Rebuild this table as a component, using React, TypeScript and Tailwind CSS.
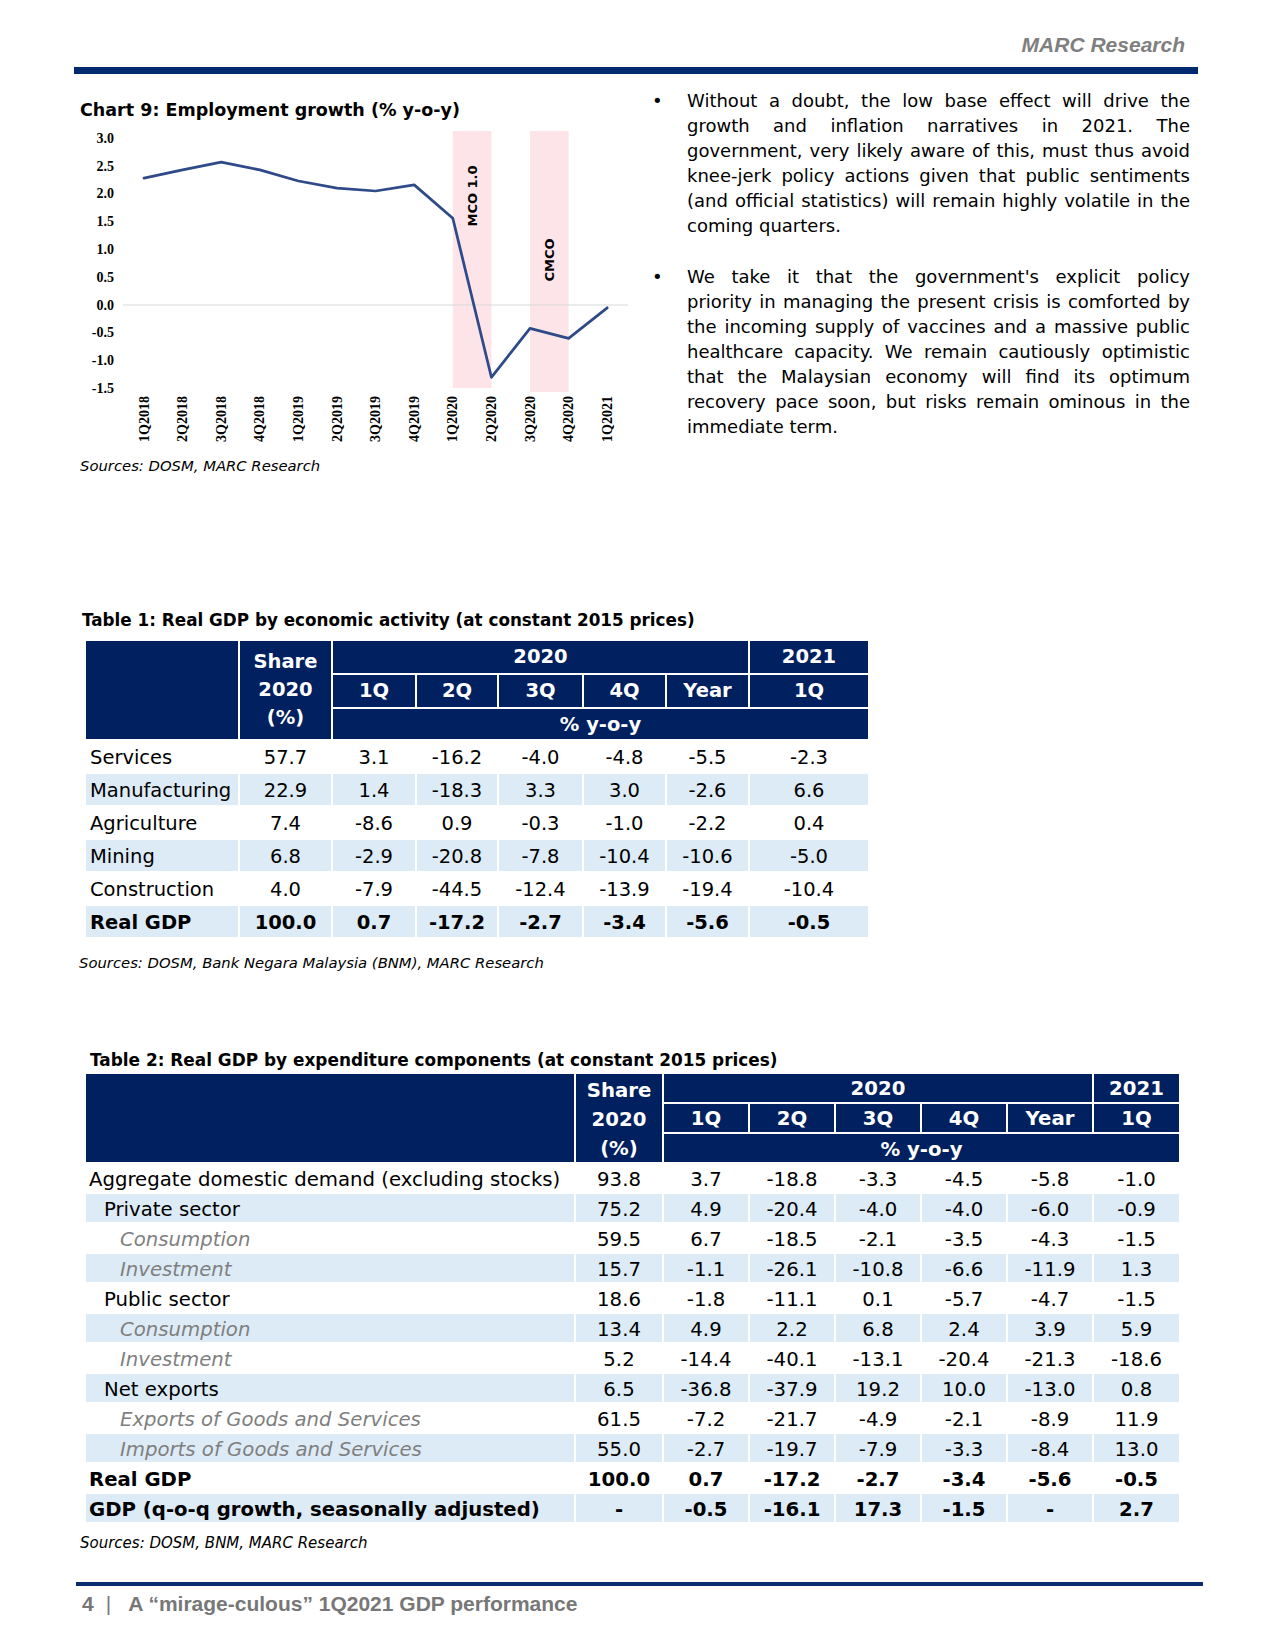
import React from 'react'

const quarters = ['1Q2018', '2Q2018', '3Q2018', '4Q2018', '1Q2019', '2Q2019', '3Q2019', '4Q2019', '1Q2020', '2Q2020', '3Q2020', '4Q2020', '1Q2021']
const growth = [2.28, 2.43, 2.57, 2.43, 2.23, 2.1, 2.05, 2.16, 1.56, -1.3, -0.42, -0.6, -0.05]
const ticks = [3.0, 2.5, 2.0, 1.5, 1.0, 0.5, 0.0, -0.5, -1.0, -1.5]

const px = (i: number) => 64 + i * 38.6
const py = (v: number) => 183 - v * 55.6

const table1 = [
    { label: 'Services', vals: ['57.7', '3.1', '-16.2', '-4.0', '-4.8', '-5.5', '-2.3'] },
    { label: 'Manufacturing', vals: ['22.9', '1.4', '-18.3', '3.3', '3.0', '-2.6', '6.6'] },
    { label: 'Agriculture', vals: ['7.4', '-8.6', '0.9', '-0.3', '-1.0', '-2.2', '0.4'] },
    { label: 'Mining', vals: ['6.8', '-2.9', '-20.8', '-7.8', '-10.4', '-10.6', '-5.0'] },
    { label: 'Construction', vals: ['4.0', '-7.9', '-44.5', '-12.4', '-13.9', '-19.4', '-10.4'] },
    { label: 'Real GDP', bold: true, vals: ['100.0', '0.7', '-17.2', '-2.7', '-3.4', '-5.6', '-0.5'] },
]

type Row = { label: string; level?: number; italic?: boolean; bold?: boolean; vals: string[] }

const table2: Row[] = [
    { label: 'Aggregate domestic demand (excluding stocks)', vals: ['93.8', '3.7', '-18.8', '-3.3', '-4.5', '-5.8', '-1.0'] },
    { label: 'Private sector', level: 1, vals: ['75.2', '4.9', '-20.4', '-4.0', '-4.0', '-6.0', '-0.9'] },
    { label: 'Consumption', level: 2, italic: true, vals: ['59.5', '6.7', '-18.5', '-2.1', '-3.5', '-4.3', '-1.5'] },
    { label: 'Investment', level: 2, italic: true, vals: ['15.7', '-1.1', '-26.1', '-10.8', '-6.6', '-11.9', '1.3'] },
    { label: 'Public sector', level: 1, vals: ['18.6', '-1.8', '-11.1', '0.1', '-5.7', '-4.7', '-1.5'] },
    { label: 'Consumption', level: 2, italic: true, vals: ['13.4', '4.9', '2.2', '6.8', '2.4', '3.9', '5.9'] },
    { label: 'Investment', level: 2, italic: true, vals: ['5.2', '-14.4', '-40.1', '-13.1', '-20.4', '-21.3', '-18.6'] },
    { label: 'Net exports', level: 1, vals: ['6.5', '-36.8', '-37.9', '19.2', '10.0', '-13.0', '0.8'] },
    { label: 'Exports of Goods and Services', level: 2, italic: true, vals: ['61.5', '-7.2', '-21.7', '-4.9', '-2.1', '-8.9', '11.9'] },
    { label: 'Imports of Goods and Services', level: 2, italic: true, vals: ['55.0', '-2.7', '-19.7', '-7.9', '-3.3', '-8.4', '13.0'] },
    { label: 'Real GDP', bold: true, vals: ['100.0', '0.7', '-17.2', '-2.7', '-3.4', '-5.6', '-0.5'] },
    { label: 'GDP (q-o-q growth, seasonally adjusted)', bold: true, vals: ['-', '-0.5', '-16.1', '17.3', '-1.5', '-', '2.7'] },
]

const bullets = [
    [
        'Without a doubt, the low base effect will drive the',
        'growth and inflation narratives in 2021. The',
        'government, very likely aware of this, must thus avoid',
        'knee-jerk policy actions given that public sentiments',
        '(and official statistics) will remain highly volatile in the',
        'coming quarters.',
    ],
    [
        "We take it that the government's explicit policy",
        'priority in managing the present crisis is comforted by',
        'the incoming supply of vaccines and a massive public',
        'healthcare capacity. We remain cautiously optimistic',
        'that the Malaysian economy will find its optimum',
        'recovery pace soon, but risks remain ominous in the',
        'immediate term.',
    ],
]

const quarterHeads = ['1Q', '2Q', '3Q', '4Q', 'Year', '1Q']

function EmploymentChart() {
    const line = growth.map((v, i) => `${i === 0 ? 'M' : 'L'}${px(i).toFixed(1)},${py(v).toFixed(1)}`).join(' ')
    return (
        <svg width="560" height="334" viewBox="0 0 560 334" className="block">
            <rect x={px(8)} y="9" width={px(9) - px(8)} height="257" fill="#fce4e8" />
            <rect x={px(10)} y="9" width={px(11) - px(10)} height="261" fill="#fce4e8" />
            <line x1="43" y1={py(0)} x2="548" y2={py(0)} stroke="#d9d9d9" strokeWidth="1" />
            {ticks.map((t) => (
                <text key={t} x="34" y={py(t)} textAnchor="end" dominantBaseline="central" fontFamily="'Liberation Serif', serif" fontWeight="bold" fontSize="14" fill="#000">
                    {t.toFixed(1)}
                </text>
            ))}
            {quarters.map((q, i) => (
                <text key={q} x={px(i)} y="274" textAnchor="end" dominantBaseline="central" transform={`rotate(-90 ${px(i)} 274)`} fontFamily="'Liberation Serif', serif" fontWeight="bold" fontSize="14" fill="#000">
                    {q}
                </text>
            ))}
            <text x={(px(8) + px(9)) / 2} y="74" textAnchor="middle" dominantBaseline="central" transform={`rotate(-90 ${(px(8) + px(9)) / 2} 74)`} fontFamily="'DejaVu Sans', sans-serif" fontWeight="bold" fontSize="13" fill="#000">
                MCO 1.0
            </text>
            <text x={(px(10) + px(11)) / 2} y="138" textAnchor="middle" dominantBaseline="central" transform={`rotate(-90 ${(px(10) + px(11)) / 2} 138)`} fontFamily="'DejaVu Sans', sans-serif" fontWeight="bold" fontSize="13" fill="#000">
                CMCO
            </text>
            <path d={line} fill="none" stroke="#2f4a88" strokeWidth="2.75" strokeLinejoin="round" strokeLinecap="round" />
        </svg>
    )
}

export default function App() {
    return (
        <div className="w-[1275px] min-h-[1650px] bg-white text-black font-['DejaVu_Sans',sans-serif] pb-[34px]">
            {/* header */}
            <div className="pt-[33px] pr-[90px] text-right text-[21px] leading-[24px] font-bold italic text-[#7f7f7f] font-['Liberation_Sans',Arial,sans-serif]">
                MARC Research
            </div>
            <div className="mt-[10px] ml-[74px] w-[1124px] h-[7px] bg-[#002a70]"></div>

            {/* chart + commentary */}
            <div className="mt-[14px] flex">
                <div className="ml-[80px] w-[560px]">
                    <h3 className="mt-[10px] text-[17.5px] leading-[24px] font-bold whitespace-nowrap">Chart 9: Employment growth (% y-o-y)</h3>
                    <EmploymentChart />
                    <p className="text-[14.8px] leading-[20px] italic">Sources: DOSM, MARC Research</p>
                </div>
                <div className="ml-[10px] w-[540px] text-[18px] leading-[25px]">
                    {bullets.map((para, p) => (
                        <div key={p} className={`flex ${p > 0 ? 'mt-[26px]' : ''}`}>
                            <span className="w-[37px] shrink-0 pl-[2px]">•</span>
                            <div className="w-[503px]">
                                {para.map((l, i) => (
                                    <div key={i} className={i < para.length - 1 ? 'text-justify [text-align-last:justify] whitespace-nowrap' : 'text-left'}>
                                        {l}
                                    </div>
                                ))}
                            </div>
                        </div>
                    ))}
                </div>
            </div>

            {/* Table 1 */}
            <h3 className="mt-[132px] ml-[82px] text-[16.8px] leading-[24px] font-bold whitespace-nowrap">
                Table 1: Real GDP by economic activity (at constant 2015 prices)
            </h3>
            <div className="mt-[9px] ml-[86px] grid w-[782px] grid-cols-[152px_91px_82px_80px_83px_81px_81px_118px] grid-rows-[32px_32px_30px_repeat(6,31px)] gap-[2px] text-[19.5px]">
                <div className="row-span-3 bg-[#002060]"></div>
                <div className="row-span-3 flex flex-col items-center justify-center bg-[#002060] font-bold leading-[28px] text-white">
                    <span>Share</span>
                    <span>2020</span>
                    <span>(%)</span>
                </div>
                <div className="col-span-5 flex items-center justify-center bg-[#002060] font-bold text-white">2020</div>
                <div className="flex items-center justify-center bg-[#002060] font-bold text-white">2021</div>
                {quarterHeads.map((h, i) => (
                    <div key={i} className="flex items-center justify-center bg-[#002060] font-bold text-white">{h}</div>
                ))}
                <div className="col-span-6 flex items-center justify-center bg-[#002060] pt-[2px] font-bold text-white">% y-o-y</div>
                {table1.map((r, ri) => {
                    const bg = ri % 2 === 1 ? 'bg-[#ddebf7]' : 'bg-white'
                    return (
                        <React.Fragment key={r.label}>
                            <div className={`flex items-center pl-[4px] pt-[3px] whitespace-nowrap ${bg} ${r.bold ? 'font-bold' : ''}`}>{r.label}</div>
                            {r.vals.map((v, vi) => (
                                <div key={vi} className={`flex items-center justify-center pt-[3px] ${bg} ${r.bold ? 'font-bold' : ''}`}>{v}</div>
                            ))}
                        </React.Fragment>
                    )
                })}
            </div>
            <p className="mt-[16px] ml-[79px] text-[14.8px] leading-[20px] italic">
                Sources: DOSM, Bank Negara Malaysia (BNM), MARC Research
            </p>

            {/* Table 2 */}
            <h3 className="mt-[75px] ml-[90px] text-[16.9px] leading-[24px] font-bold whitespace-nowrap">
                Table 2: Real GDP by expenditure components (at constant 2015 prices)
            </h3>
            <div className="mt-[2px] ml-[86px] grid w-[1093px] grid-cols-[488px_86px_84px_84px_84px_84px_84px_85px] grid-rows-[repeat(15,28px)] gap-[2px] text-[19.7px]">
                <div className="row-span-3 bg-[#002060]"></div>
                <div className="row-span-3 flex flex-col items-center justify-center bg-[#002060] pt-[2px] font-bold leading-[29px] text-white">
                    <span>Share</span>
                    <span>2020</span>
                    <span>(%)</span>
                </div>
                <div className="col-span-5 flex items-center justify-center bg-[#002060] pt-[2px] font-bold text-white">2020</div>
                <div className="flex items-center justify-center bg-[#002060] pt-[2px] font-bold text-white">2021</div>
                {quarterHeads.map((h, i) => (
                    <div key={i} className="flex items-center justify-center bg-[#002060] pt-[2px] font-bold text-white">{h}</div>
                ))}
                <div className="col-span-6 flex items-center justify-center bg-[#002060] pt-[3px] font-bold text-white">% y-o-y</div>
                {table2.map((r, ri) => {
                    const bg = ri % 2 === 1 ? 'bg-[#ddebf7]' : 'bg-white'
                    const indent = r.level === 2 ? 'pl-[34px]' : r.level === 1 ? 'pl-[18px]' : 'pl-[3px]'
                    return (
                        <React.Fragment key={ri}>
                            <div className={`flex items-center pt-[3px] whitespace-nowrap ${indent} ${bg} ${r.bold ? 'font-bold' : ''} ${r.italic ? 'italic text-[#7f7f7f]' : ''}`}>
                                {r.label}
                            </div>
                            {r.vals.map((v, vi) => (
                                <div key={vi} className={`flex items-center justify-center pt-[3px] ${bg} ${r.bold ? 'font-bold' : ''}`}>{v}</div>
                            ))}
                        </React.Fragment>
                    )
                })}
            </div>
            <p className="mt-[11px] ml-[80px] text-[15px] leading-[20px] italic">Sources: DOSM, BNM, MARC Research</p>

            {/* footer */}
            <div className="mt-[29px] ml-[76px] w-[1127px] h-[4px] bg-[#0b2b6e]"></div>
            <div className="mt-[6px] ml-[82px] flex text-[21px] leading-[24px] font-bold text-[#777777] font-['Liberation_Sans',Arial,sans-serif]">
                <span>4</span>
                <span className="ml-[12px] font-normal">|</span>
                <span className="ml-[17px]">A “mirage-culous” 1Q2021 GDP performance</span>
            </div>
        </div>
    )
}
